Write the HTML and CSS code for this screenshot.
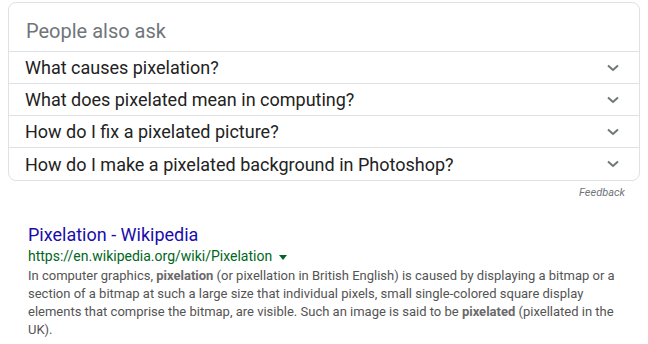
FILE: index.html
```html
<!DOCTYPE html>
<html>
<head>
<meta charset="utf-8">
<link rel="stylesheet" href="styles.css">
</head>
<body>
<div class="paa">
  <div class="paa-head">People also ask</div>
  <div class="q"><span>What causes pixelation?</span><svg class="chev" viewBox="0 0 12 8"><path d="M1 1.5 L6 6 L11 1.5" fill="none" stroke="#70757a" stroke-width="2"/></svg></div>
  <div class="q"><span>What does pixelated mean in computing?</span><svg class="chev" viewBox="0 0 12 8"><path d="M1 1.5 L6 6 L11 1.5" fill="none" stroke="#70757a" stroke-width="2"/></svg></div>
  <div class="q"><span>How do I fix a pixelated picture?</span><svg class="chev" viewBox="0 0 12 8"><path d="M1 1.5 L6 6 L11 1.5" fill="none" stroke="#70757a" stroke-width="2"/></svg></div>
  <div class="q"><span>How do I make a pixelated background in Photoshop?</span><svg class="chev" viewBox="0 0 12 8"><path d="M1 1.5 L6 6 L11 1.5" fill="none" stroke="#70757a" stroke-width="2"/></svg></div>
</div>
<div class="feedback">Feedback</div>
<div class="result">
  <a class="title">Pixelation - Wikipedia</a>
  <div class="url">https://en.wikipedia.org/wiki/Pixelation <span class="tri"></span></div>
  <div class="snippet">In computer graphics, <b>pixelation</b> (or pixellation in British English) is caused by displaying a bitmap or a section of a bitmap at such a large size that individual pixels, small single-colored square display elements that comprise the bitmap, are visible. Such an image is said to be <b>pixelated</b> (pixellated in the UK).</div>
</div>
</body>
</html>
```
FILE: styles.css
```css
html, body { margin: 0; padding: 0; background: #fff; }
body { font-family: Roboto, "Liberation Sans", Arial, sans-serif; padding: 2px 8px 0 8px; width: 632px; }
.paa {
  border: 1px solid #dfe1e5;
  border-radius: 8px;
  width: 630px;
}
.paa-head {
  height: 49px;
  box-sizing: border-box;
  padding: 16px 0 0 17px;
  font-size: 20px;
  color: #70757a;
  line-height: 24px;
  border-bottom: 1px solid #dfe1e5;
}
.q {
  height: 31px;
  display: flex;
  align-items: center;
  justify-content: space-between;
  padding: 0 20px 0 16px;
  font-size: 18px;
  color: #222;
  border-bottom: 1px solid #dfe1e5;
}
.q:last-child { border-bottom: none; height: 32px; }
.chev { width: 12px; height: 8px; }
.feedback {
  text-align: right;
  font-size: 11px;
  font-style: italic;
  color: #70757a;
  padding: 5px 15px 0 0;
  line-height: 14px;
}
.result { padding: 24px 0 0 20px; width: 604px; }
.title {
  display: block;
  font-size: 18px;
  line-height: 22px;
  color: #1a0dab;
}
.url {
  font-size: 14px;
  line-height: 18px;
  color: #006621;
  margin-top: 1px;
}
.tri {
  display: inline-block;
  width: 0; height: 0;
  border-left: 4px solid transparent;
  border-right: 4px solid transparent;
  border-top: 5px solid #006621;
  vertical-align: middle;
  margin-left: 3px;
}
.snippet {
  font-size: 13px;
  line-height: 18px;
  color: #545454;
  margin-top: 2px;
}
.snippet b { color: #6a6a6a; }
```
